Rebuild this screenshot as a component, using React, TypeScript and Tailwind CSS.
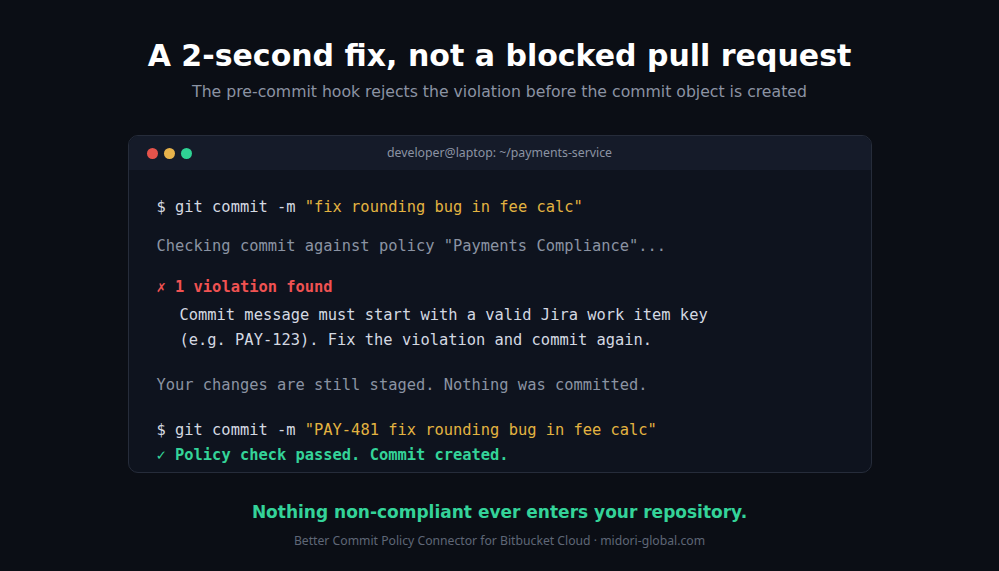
import React from "react";

const mono = { fontFamily: '"DejaVu Sans Mono", "Liberation Mono", monospace' };
const noto = { fontFamily: '"Noto Sans", "Open Sans", sans-serif' };

export default function App() {
  return (
    <div
      className="min-h-[571px] w-full bg-[#0b0e15] flex flex-col items-center pt-9"
      style={{ fontFamily: '"DejaVu Sans", "Noto Sans", sans-serif' }}
    >
      <h1 className="text-[30px] leading-10 font-bold text-white">
        A 2-second fix, not a blocked pull request
      </h1>
      <p className="mt-1 text-[15.7px] leading-6 text-[#8b93a3]">
        The pre-commit hook rejects the violation before the commit object is created
      </p>

      {/* terminal window */}
      <div className="mt-[31px] w-[744px] rounded-[10px] border border-[#262c3a] bg-[#0e131e] overflow-hidden">
        <div className="relative flex h-[34px] items-center bg-[#151b29] px-[18px]">
          <div className="flex gap-[6px]">
            <span className="h-[11px] w-[11px] rounded-full bg-[#e5534b]" />
            <span className="h-[11px] w-[11px] rounded-full bg-[#e8b34b]" />
            <span className="h-[11px] w-[11px] rounded-full bg-[#2fd394]" />
          </div>
          <div
            className="absolute inset-0 flex items-center justify-center pt-px text-[12.3px] text-[#8b93a3]"
            style={noto}
          >
            developer@laptop: ~/payments-service
          </div>
        </div>

        <div className="px-7 pt-[25px] pb-1 text-[15.4px] leading-[25px] text-[#d4d9e2]" style={mono}>
          <div>
            $ git commit -m <span className="text-[#e3b341]">"fix rounding bug in fee calc"</span>
          </div>
          <div className="mt-[14px] text-[#8b93a3]">
            Checking commit against policy "Payments Compliance"...
          </div>
          <div className="mt-4 font-bold text-[#f05252]">
            <span className="font-normal">✗</span> 1 violation found
          </div>
          <div className="mt-[3px] ml-[23px]">
            Commit message must start with a valid Jira work item key
            <br />
            (e.g. PAY-123). Fix the violation and commit again.
          </div>
          <div className="mt-5 text-[#8b93a3]">
            Your changes are still staged. Nothing was committed.
          </div>
          <div className="mt-5">
            $ git commit -m{" "}
            <span className="text-[#e3b341]">"PAY-481 fix rounding bug in fee calc"</span>
          </div>
          <div className="font-bold text-[#34d399]">
            <span className="font-normal">✓</span> Policy check passed. Commit created.
          </div>
        </div>
      </div>

      <p className="mt-[25px] text-[17px] leading-7 font-bold text-[#34d399]">
        Nothing non-compliant ever enters your repository.
      </p>
      <p className="mt-[5px] text-[12.2px] leading-5 text-[#5f6777]" style={noto}>
        Better Commit Policy Connector for Bitbucket Cloud · midori-global.com
      </p>
    </div>
  );
}
